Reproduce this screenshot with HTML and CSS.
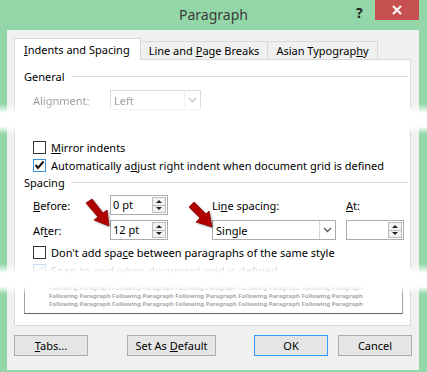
FILE: index.html
```html
<!DOCTYPE html>
<html lang="en">
<head>
  <meta charset="UTF-8">
  <title>Paragraph</title>
  <link rel="stylesheet" href="styles.css">
</head>
<body>

<div class="window">
  <div class="titlebar">
    <span class="title">Paragraph</span>
    <span class="help">?</span>
    <span class="close">
      <svg width="10" height="10" viewBox="0 0 10 10"><path d="M1 1 L9 9 M9 1 L1 9" stroke="#fff" stroke-width="2"/></svg>
    </span>
  </div>

  <div class="dialog">
    <div class="tabs">
      <div class="tab active"><u>I</u>ndents and Spacing</div>
      <div class="tab">Line and <u>P</u>age Breaks</div>
      <div class="tab">Asian Typograp<u>h</u>y</div>
    </div>

    <div class="panel">
      <div class="group">General</div>
      <div class="row faded">
        <span class="label">Alignment:</span>
        <div class="select small"><span>Left</span><span class="drop"><svg width="9" height="6" viewBox="0 0 9 6"><path d="M1 1 L4.5 4.5 L8 1" fill="none" stroke="#777" stroke-width="1.3"/></svg></span></div>
      </div>

      <label class="check mirror"><span class="box"></span><span class="text"><u>M</u>irror indents</span></label>
      <label class="check"><span class="box checked"><svg width="11" height="10" viewBox="0 0 11 10"><path d="M1.5 5 L4 8 L9.5 1.5" fill="none" stroke="#111" stroke-width="2"/></svg></span><span class="text">Automatically a<u>d</u>just right indent when document grid is defined</span></label>

      <div class="group">Spacing</div>
      <div class="spacing">
        <span class="label"><u>B</u>efore:</span>
        <div class="spin"><span class="val">0 pt</span><span class="arrows"><span class="up"></span><span class="down"></span></span></div>
        <span class="label ls">Li<u>n</u>e spacing:</span>
        <span class="label at-label"><u>A</u>t:</span>

        <span class="label">Af<u>t</u>er:</span>
        <div class="spin"><span class="val">12 pt</span><span class="arrows"><span class="up"></span><span class="down"></span></span></div>
        <div class="select ls"><span>Single</span><span class="drop"><svg width="9" height="6" viewBox="0 0 9 6"><path d="M1 1 L4.5 4.5 L8 1" fill="none" stroke="#555" stroke-width="1.3"/></svg></span></div>
        <div class="spin at"><span class="val"></span><span class="arrows"><span class="up"></span><span class="down"></span></span></div>
      </div>

      <label class="check dont"><span class="box"></span><span class="text">Don't add spa<u>c</u>e between paragraphs of the same style</span></label>
      <label class="check snap"><span class="box checked"><svg width="11" height="10" viewBox="0 0 11 10"><path d="M1.5 5 L4 8 L9.5 1.5" fill="none" stroke="#999" stroke-width="2"/></svg></span><span class="text">Snap to grid when document grid is defined</span></label>

      <div class="preview">
        <p>Following Paragraph Following Paragraph Following Paragraph Following Paragraph Following Paragraph</p>
        <p>Following Paragraph Following Paragraph Following Paragraph Following Paragraph Following Paragraph</p>
        <p>Following Paragraph Following Paragraph Following Paragraph Following Paragraph Following Paragraph</p>
      </div>
    </div>

    <div class="buttons">
      <button class="btn"><u>T</u>abs...</button>
      <button class="btn wide">Set As <u>D</u>efault</button>
      <span class="spacer"></span>
      <button class="btn default">OK</button>
      <button class="btn">Cancel</button>
    </div>
  </div>

  <!-- torn-out parts of the screenshot -->
  <div class="tear tear-top"></div>
  <div class="tear tear-bottom"></div>

  <!-- red callout arrows -->
  <svg class="arrow arrow-after" width="34" height="32" viewBox="0 0 34 32">
    <path d="M3 5 L9 1 L20 15 L24 12 L26 28 L11 22 L15 19 Z" fill="#b00000" stroke="#8a0000" stroke-width="0.8"/>
  </svg>
  <svg class="arrow arrow-single" width="34" height="30" viewBox="0 0 34 30">
    <path d="M2 6 L7 1 L19 13 L22 10 L25 26 L9 21 L13 17 Z" fill="#b00000" stroke="#8a0000" stroke-width="0.8"/>
  </svg>
</div>

</body>
</html>
```

FILE: styles.css
```css
body {
  margin: 0;
  font-family: "Noto Sans", "Open Sans", sans-serif;
  font-size: 11px;
  color: #000;
}
.window {
  position: relative;
  width: 427px;
  height: 372px;
  background: #93d7a8;
  overflow: hidden;
}
.titlebar {
  height: 30px;
  position: relative;
  text-align: center;
}
.title {
  display: inline-block;
  font-size: 14px;
  line-height: 30px;
  color: #3b3b3b;
}
.help {
  position: absolute;
  left: 356px;
  top: 3px;
  font-weight: bold;
  font-size: 14px;
  color: #222;
}
.close {
  position: absolute;
  left: 375px;
  top: 0;
  width: 44px;
  height: 20px;
  background: #c75050;
  display: flex;
  align-items: center;
  justify-content: center;
}
.dialog {
  margin: 0 8px 0 7px;
  height: 340px;
  background: #f0f0f0;
  padding: 8px 7px 0 7px;
  box-sizing: border-box;
}
.tabs {
  display: flex;
  align-items: flex-end;
  height: 21px;
}
.tab {
  height: 18px;
  line-height: 17px;
  padding: 0 8px 0 8px;
  border: 1px solid #d9d9d9;
  border-bottom: none;
  background: #f0f0f0;
  box-sizing: border-box;
  margin-right: -1px;
}
.tab.active {
  height: 22px;
  line-height: 21px;
  background: #fff;
  position: relative;
  z-index: 1;
  padding: 0 10px 0 9px;
  margin-bottom: -1px;
}
.panel {
  background: #fff;
  border: 1px solid #d9d9d9;
  height: 267px;
  padding: 8px 0 0 9px;
  box-sizing: border-box;
  margin-right: 1px;
}
.group {
  display: flex;
  align-items: center;
  height: 16px;
  gap: 6px;
}
.group::after {
  content: "";
  flex: 1;
  height: 1px;
  background: #dcdcdc;
  margin-right: 2px;
}
.row {
  display: flex;
  align-items: center;
  margin-top: 6px;
  padding-left: 9px;
}
.row .label {
  width: 77px;
}
.faded {
  opacity: 0.4;
}
.select {
  display: flex;
  align-items: center;
  justify-content: space-between;
  height: 20px;
  border: 1px solid #acacac;
  box-sizing: border-box;
  padding-left: 3px;
  background: #fff;
}
.select.small {
  width: 91px;
}
.drop {
  width: 15px;
  height: 18px;
  border-left: 1px solid #d9d9d9;
  display: flex;
  align-items: center;
  justify-content: center;
}
.check {
  display: flex;
  align-items: center;
  gap: 5px;
  height: 18px;
  padding-left: 9px;
}
.check .text {
  white-space: nowrap;
}
.check.mirror {
  margin-top: 28px;
}
.box {
  width: 13px;
  height: 13px;
  border: 1px solid #333;
  box-sizing: border-box;
  display: flex;
  align-items: center;
  justify-content: center;
  background: #fff;
  flex-shrink: 0;
}
.box.checked {
  border-color: #3c8fd9;
}
.box svg {
  margin-top: -1px;
}
.spacing {
  display: grid;
  grid-template-columns: 77px 58px 168px 59px;
  row-gap: 5px;
  padding-left: 9px;
  margin-top: 5px;
  align-items: center;
}
.spacing .ls {
  margin-left: 44px;
}
.spacing .select.ls {
  width: 124px;
}
.spacing .at-label,
.spacing .spin.at {
  margin-left: 10px;
}
.spin {
  display: flex;
  height: 20px;
  width: 58px;
  border: 1px solid #acacac;
  box-sizing: border-box;
  background: #fff;
}
.spin .val {
  flex: 1;
  padding-left: 2px;
  line-height: 18px;
}
.arrows {
  width: 14px;
  display: flex;
  flex-direction: column;
  margin: 1px 1px 1px 0;
}
.arrows span {
  flex: 1;
  border: 1px solid #bcbcbc;
  background: #f2f2f2;
  display: flex;
  align-items: center;
  justify-content: center;
}
.arrows .down {
  border-top: none;
}
.arrows .up::after {
  content: "";
  border: 3px solid transparent;
  border-bottom: 3px solid #222;
  border-top: none;
}
.arrows .down::after {
  content: "";
  border: 3px solid transparent;
  border-top: 3px solid #222;
  border-bottom: none;
}
.check.dont {
  margin-top: 3px;
}
.check.snap {
  opacity: 0.3;
}
.preview {
  margin: 3px 7px 0 0;
  height: 32px;
  border: 1px solid #a0a0a0;
  border-bottom-color: #646464;
  border-top: none;
  box-sizing: border-box;
  overflow: hidden;
  padding: 2px 0 0 24px;
}
.preview p {
  margin: 0;
  font-size: 6px;
  line-height: 8px;
  color: #a8a8a8;
  white-space: nowrap;
  font-weight: bold;
}
.buttons {
  display: flex;
  margin-top: 9px;
  gap: 10px;
}
.btn {
  width: 74px;
  height: 21px;
  border: 1px solid #acacac;
  background: #e5e5e5;
  font-family: inherit;
  font-size: 11px;
  padding: 0;
  color: #000;
}
.btn.wide {
  width: 89px;
  margin-left: 29px;
}
.btn.default {
  border-color: #3399ff;
}
.spacer {
  flex: 1;
}
.tear {
  position: absolute;
  left: 0;
  right: 0;
  background: linear-gradient(to bottom, rgba(255,255,255,0), #fff 30%, #fff 75%, rgba(255,255,255,0));
}
.tear-top {
  top: 104px;
  height: 30px;
}
.tear-bottom {
  top: 264px;
  height: 30px;
}
.arrow {
  position: absolute;
  filter: drop-shadow(1px 1px 1px rgba(0,0,0,0.35));
}
.arrow-after {
  left: 83px;
  top: 198px;
}
.arrow-single {
  left: 187px;
  top: 201px;
}
```
